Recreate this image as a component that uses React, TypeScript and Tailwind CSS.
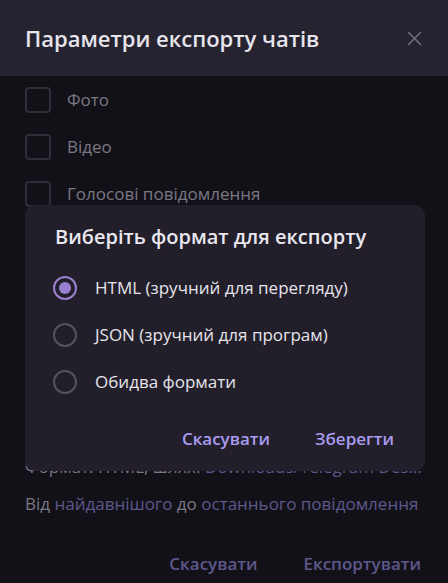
const checks = ['Фото', 'Відео', 'Голосові повідомлення']

const formats = [
  { label: 'HTML (зручний для перегляду)', selected: true },
  { label: 'JSON (зручний для програм)', selected: false },
  { label: 'Обидва формати', selected: false },
]

const App = () => {
  return (
    <div className="relative w-[448px] h-[583px] overflow-hidden bg-[#131118] font-['Open_Sans',sans-serif]">
      {/* header */}
      <div className="h-[76px] bg-[#25232f] flex items-center justify-between pl-[25px] pr-[26px]">
        <h1 className="text-[22px] font-semibold text-[#e6e4ec] leading-none">Параметри експорту чатів</h1>
        <svg width="15" height="15" viewBox="0 0 15 15" className="text-[#6e6b78]">
          <path d="M1 1 L14 14 M14 1 L1 14" stroke="currentColor" strokeWidth="1.7" />
        </svg>
      </div>

      {/* options list */}
      <div>
        {checks.map((c) => (
          <div key={c} className="h-[47px] flex items-center pl-[25px] gap-[16px]">
            <div className="w-[26px] h-[26px] rounded-[4px] border-2 border-[#302d38]" />
            <span className="text-[17px] text-[#7a7884]">{c}</span>
          </div>
        ))}
      </div>

      <div className="h-[239px]" />

      <div className="pl-[25px] text-[17px] leading-[22px] text-[#7a7884] whitespace-nowrap">
        Формат: HTML, шлях: <span className="text-[#5d588c]">Downloads/Telegram Des...</span>
      </div>
      <div className="mt-[15px] pl-[25px] text-[17px] leading-[22px] text-[#7a7884] whitespace-nowrap">
        Від <span className="text-[#5d588c]">найдавнішого</span> до <span className="text-[#5d588c]">останнього повідомлення</span>
      </div>

      <div className="mt-[36px] flex justify-end gap-[46px] pr-[27px] text-[17px] font-semibold text-[#5d588c]">
        <span>Скасувати</span>
        <span>Експортувати</span>
      </div>

      {/* format dialog */}
      <div className="absolute left-[25px] top-[205px] w-[400px] h-[266px] rounded-[10px] bg-[#221f2a]">
        <div className="pt-[20px] pl-[30px] text-[20px] font-semibold leading-[24px] text-[#e9e7ef]">
          Виберіть формат для експорту
        </div>
        <div className="mt-[15px]">
          {formats.map((f) => (
            <div key={f.label} className="h-[47px] flex items-center pl-[28px] gap-[18px]">
              <div
                className={
                  f.selected
                    ? 'w-[24px] h-[24px] rounded-full border-2 border-[#9a80d0] flex items-center justify-center'
                    : 'w-[24px] h-[24px] rounded-full border-2 border-[#55515f]'
                }
              >
                {f.selected && <div className="w-[12px] h-[12px] rounded-full bg-[#9a80d0]" />}
              </div>
              <span className="text-[17px] text-[#e6e4ec]">{f.label}</span>
            </div>
          ))}
        </div>
        <div className="mt-[22px] flex justify-end gap-[45px] pr-[31px] text-[17px] leading-[24px] font-semibold text-[#a99cf0]">
          <span>Скасувати</span>
          <span>Зберегти</span>
        </div>
      </div>
    </div>
  )
}

export default App
